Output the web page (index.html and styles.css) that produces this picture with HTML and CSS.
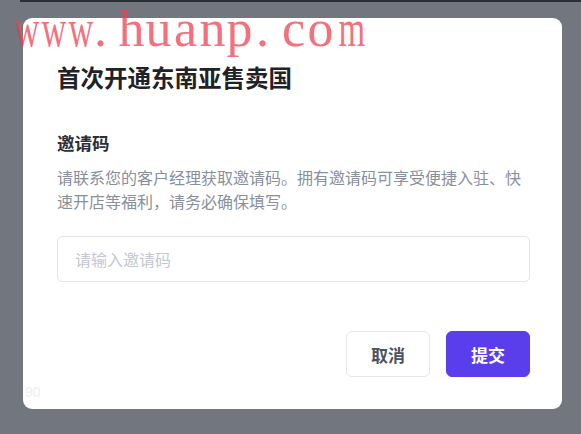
FILE: index.html
```html
<!DOCTYPE html>
<html lang="zh">
<head>
<meta charset="utf-8">
<link rel="stylesheet" href="styles.css">
</head>
<body>
<div class="topbar"></div>
<div class="modal">
  <h1 class="title">首次开通东南亚售卖国</h1>
  <div class="label">邀请码</div>
  <p class="desc">请联系您的客户经理获取邀请码。拥有邀请码可享受便捷入驻、快速开店等福利，请务必确保填写。</p>
  <input class="field" type="text" placeholder="请输入邀请码">
  <div class="actions">
    <button class="btn btn-cancel">取消</button>
    <button class="btn btn-primary">提交</button>
  </div>
  <span class="ghost">90</span>
</div>
<div class="watermark"><span class="ch wide">w</span><span class="ch wide">w</span><span class="ch wide">w</span><span class="ch dot">.</span><span class="ch">h</span><span class="ch">u</span><span class="ch">a</span><span class="ch">n</span><span class="ch">p</span><span class="ch dot">.</span><span class="ch">c</span><span class="ch">o</span><span class="ch wide">m</span></div>
</body>
</html>
```
FILE: styles.css
```css
html, body {
  margin: 0;
  padding: 0;
}
body {
  width: 581px;
  height: 434px;
  overflow: hidden;
  background: #72767f;
  font-family: "Noto Sans CJK SC", "Noto Sans", sans-serif;
  position: relative;
}
.topbar {
  height: 2px;
  margin-left: 20px;
  background: #2b2e35;
}
.modal {
  position: relative;
  box-sizing: border-box;
  margin: 16px 0 0 23px;
  width: 539px;
  height: 391px;
  background: #fff;
  border-radius: 9px;
  padding: 44px 32px 0 34px;
}
.title {
  margin: 0;
  font-size: 23.5px;
  line-height: 30px;
  font-weight: 700;
  color: #1f2329;
}
.label {
  margin-top: 39px;
  font-size: 17.5px;
  line-height: 24px;
  font-weight: 600;
  color: #2a2f38;
}
.desc {
  margin: 10px 0 0;
  font-size: 16px;
  line-height: 24px;
  color: #8a909b;
}
.field {
  display: block;
  box-sizing: border-box;
  margin-top: 23px;
  width: 100%;
  height: 46px;
  border: 1px solid #e3e5ec;
  border-radius: 5px;
  padding: 0 17px;
  font-family: inherit;
  font-size: 16px;
  outline: none;
}
.field::placeholder {
  color: #c4c7d0;
}
.actions {
  display: flex;
  justify-content: flex-end;
  gap: 16px;
  margin-top: 49px;
}
.btn {
  height: 46px;
  border-radius: 6px;
  font-family: inherit;
  font-size: 17px;
  font-weight: 600;
  padding: 0;
}
.btn-cancel {
  width: 84px;
  background: #fff;
  border: 1px solid #e5e6eb;
  color: #4b5260;
}
.btn-primary {
  width: 84px;
  background: #5a3eec;
  border: 1px solid #5a3eec;
  color: #fff;
}
.ghost {
  position: absolute;
  left: 2px;
  bottom: 9px;
  font-family: "Liberation Sans", sans-serif;
  font-size: 14px;
  color: #eef0f4;
}
.watermark {
  position: absolute;
  left: 10px;
  top: 0;
  display: flex;
  font-family: "Liberation Serif", serif;
  font-size: 52px;
  line-height: 58px;
  color: rgba(238, 66, 80, 0.75);
  pointer-events: none;
}
.ch {
  display: inline-block;
  width: 27px;
  text-align: center;
}
.wide {
  transform: scaleX(0.66);
}
.dot {
  text-align: left;
  text-indent: 3px;
}
```
